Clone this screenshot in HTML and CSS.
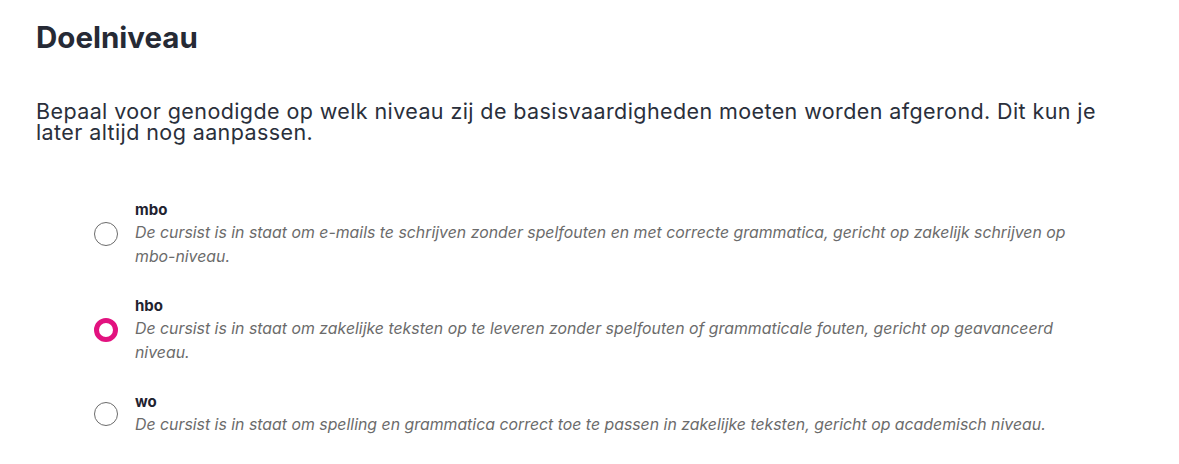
FILE: index.html
```html
<!DOCTYPE html>
<html lang="nl">
<head>
    <meta charset="UTF-8">
    <meta name="viewport" content="width=device-width, initial-scale=1.0">
    <title>Doelniveau</title>
    <link rel="stylesheet" href="styles.css">
</head>
<body>
    <div class="container">
        <h1 class="title">Doelniveau</h1>
        <p class="intro">Bepaal voor genodigde op welk niveau zij de basisvaardigheden moeten worden afgerond. Dit kun je later altijd nog aanpassen.</p>

        <div class="options-container">
            <label class="option">
                <input type="radio" name="level" value="mbo">
                <span class="radio"></span>
                <span class="option-text">
                    <span class="option-label">mbo</span>
                    <span class="option-desc">De cursist is in staat om e-mails te schrijven zonder spelfouten en met correcte grammatica, gericht op zakelijk schrijven op mbo-niveau.</span>
                </span>
            </label>

            <label class="option">
                <input type="radio" name="level" value="hbo" checked>
                <span class="radio"></span>
                <span class="option-text">
                    <span class="option-label">hbo</span>
                    <span class="option-desc">De cursist is in staat om zakelijke teksten op te leveren zonder spelfouten of grammaticale fouten, gericht op geavanceerd niveau.</span>
                </span>
            </label>

            <label class="option">
                <input type="radio" name="level" value="wo">
                <span class="radio"></span>
                <span class="option-text">
                    <span class="option-label">wo</span>
                    <span class="option-desc">De cursist is in staat om spelling en grammatica correct toe te passen in zakelijke teksten, gericht op academisch niveau.</span>
                </span>
            </label>
        </div>
    </div>
</body>
</html>
```

FILE: styles.css
```css
* {
    margin: 0;
    padding: 0;
    box-sizing: border-box;
}

body {
    font-family: Inter, "Noto Sans", sans-serif;
    background-color: #ffffff;
    color: #272b36;
}

.container {
    padding: 20px 36px 20px 36px;
}

.title {
    font-size: 29.5px;
    line-height: 34px;
    font-weight: 700;
    color: #262a35;
}

.intro {
    margin-top: 47px;
    max-width: 1100px;
    font-size: 21.5px;
    line-height: 21px;
    letter-spacing: 0.4px;
    color: #2a2f3b;
}

.options-container {
    display: flex;
    flex-direction: column;
    gap: 26px;
    margin-top: 56px;
    padding-left: 58px;
    max-width: 1060px;
}

.option {
    display: flex;
    align-items: center;
    gap: 17px;
    cursor: pointer;
}

.option input {
    display: none;
}

.radio {
    flex: none;
    width: 24px;
    height: 24px;
    border: 1px solid #6b6b6b;
    border-radius: 50%;
    background: #fff;
}

.option input:checked + .radio {
    border: 5px solid #e2127f;
}

.option-text {
    display: flex;
    flex-direction: column;
}

.option-label {
    font-size: 15px;
    line-height: 22px;
    font-weight: 700;
    color: #1f2330;
}

.option-desc {
    font-size: 15.85px;
    line-height: 24px;
    font-style: italic;
    color: #6b6b6b;
}
```
